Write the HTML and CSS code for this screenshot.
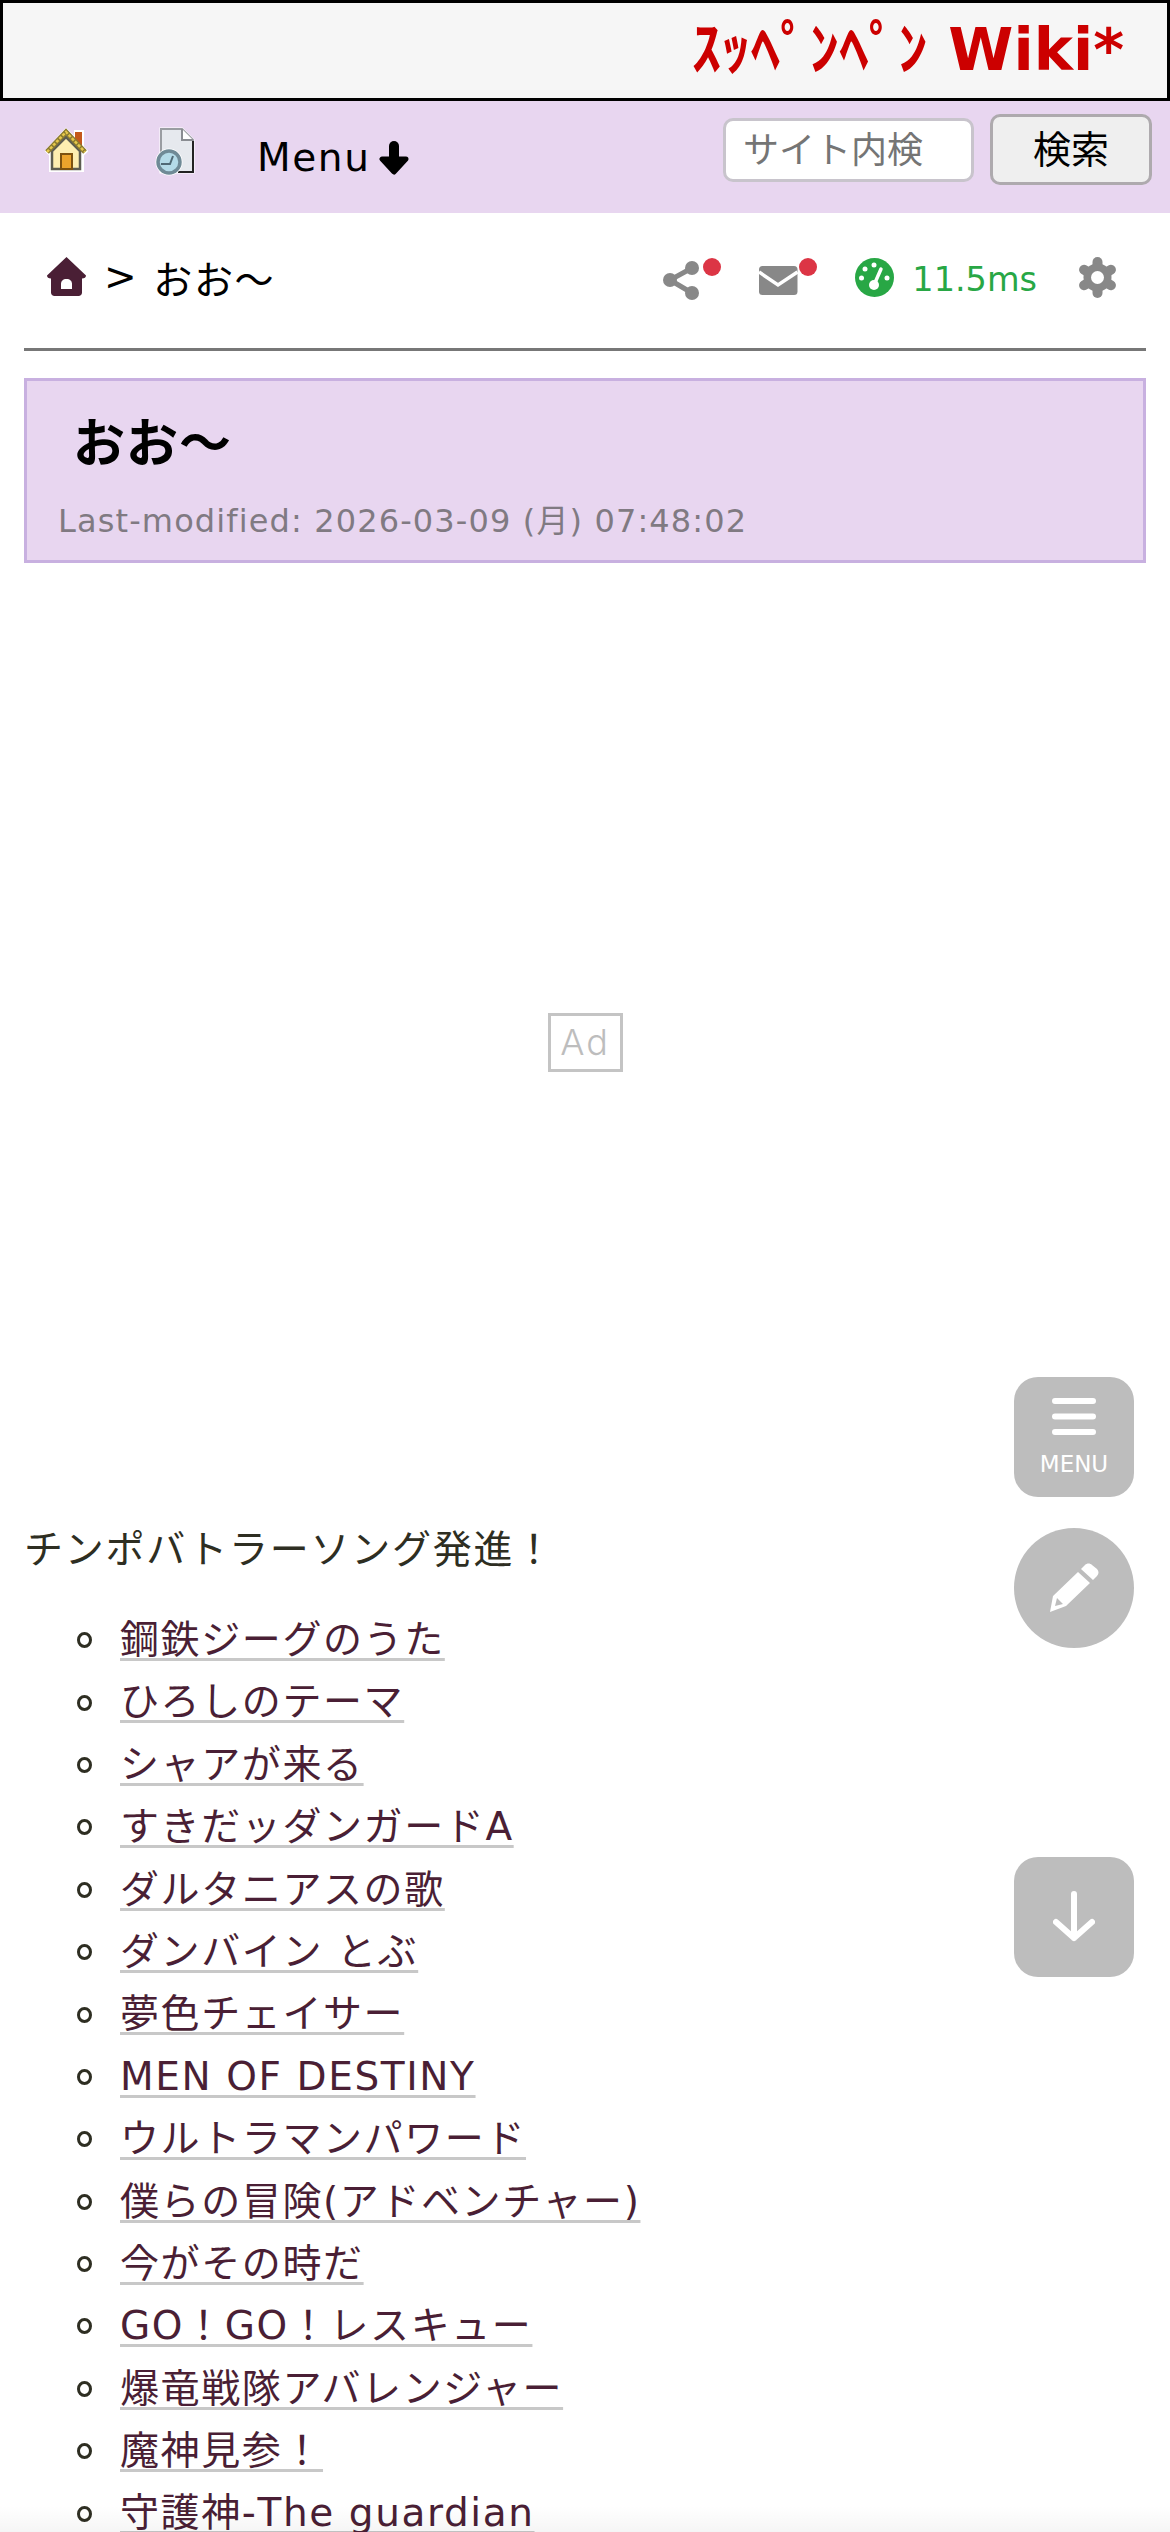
FILE: index.html
```html
<!DOCTYPE html>
<html lang="ja">

<head>
    <meta charset="UTF-8">
    <title>おお〜</title>
    <link rel="stylesheet" href="styles.css">
</head>

<body>
    <div class="page">

        <header class="banner">
            <span class="logo">ｽｯﾍﾟﾝﾍﾟﾝ Wiki*</span>
        </header>

        <nav class="nav">
            <a class="nav-home" href="#">
                <svg class="nav-icon" width="44" height="46" viewBox="0 0 44 46">
                    <path d="M2 24 22 2l9 9V4h8v16l4 4-4 4v16H6V28z" fill="#fff" stroke="#fff" stroke-width="2" />
                    <path d="M31 14V5h7v15z" fill="#c4581a" />
                    <path d="M8 24 22 10 36 24v18H8z" fill="#fdeeb0" stroke="#5c5c50" stroke-width="2.500" />
                    <path d="M3 25 22 5l19 20" fill="none" stroke="#8a7a30" stroke-width="5" />
                    <path d="M3 25 22 5l19 20" fill="none" stroke="#e6c84a" stroke-width="2.500" stroke-dasharray="3 1.500" />
                    <path d="M17 27h11v15H17z" fill="#eca42c" stroke="#7c5210" stroke-width="2" />
                </svg>
            </a>
            <a class="nav-recent" href="#">
                <svg class="nav-icon" width="42" height="50" viewBox="0 0 42 50">
                    <path d="M7 2h21l11 11v32H7z" fill="#fff" stroke="#fff" stroke-width="3" />
                    <path d="M7 26V2h21l11 11v32H24" fill="#e6e9ee" stroke="#9a9da2" stroke-width="2" />
                    <path d="M39 14v31H24" fill="none" stroke="#222" stroke-width="2" />
                    <path d="M28 2v11h11" fill="#fff" stroke="#8a8d92" stroke-width="2" />
                    <circle cx="15" cy="35" r="13.500" fill="#fff" />
                    <circle cx="15" cy="35" r="11" fill="#b4dbe8" stroke="#6f8a96" stroke-width="3.500" />
                    <path d="M7 37h9l3-8" fill="none" stroke="#506a76" stroke-width="2" />
                </svg>
            </a>
            <a class="nav-menu" href="#">Menu
                <svg width="30" height="34" viewBox="0 0 30 34">
                    <path d="M15 5v16" stroke="#000" stroke-width="10" stroke-linecap="round" />
                    <path d="M3 18h24L15 31z" fill="#000" stroke="#000" stroke-width="5" stroke-linejoin="round" />
                </svg>
            </a>
            <form class="search">
                <input class="search-input" type="text" placeholder="サイト内検索">
                <button class="search-btn" type="button">検索</button>
            </form>
        </nav>

        <div class="crumbs">
            <div class="crumb-path">
                <svg width="39" height="39" viewBox="0 0 39 39">
                    <path d="M19.500 0 39 18.500c0 2-1.500 3-4 3v14c0 2-1.500 3.500-3.500 3.500h-24C5.500 39 4 37.500 4 35.500v-14c-2.500 0-4-1-4-3z" fill="#4a1f35" />
                    <path d="M14 32v-5c0-3 2-5 5.500-5s5.500 2 5.500 5v5z" fill="#fff" />
                </svg>
                <span class="crumb-sep">&gt;</span>
                <span class="crumb-name">おお〜</span>
            </div>
            <div class="tools">
                <svg width="58" height="46" viewBox="0 0 58 46">
                    <path d="M29 11 7 23l22 13" fill="none" stroke="#888" stroke-width="5" />
                    <circle cx="29" cy="11" r="7" fill="#888" />
                    <circle cx="7" cy="23" r="7" fill="#888" />
                    <circle cx="29" cy="36" r="7" fill="#888" />
                    <circle cx="49" cy="10" r="9" fill="#dc3545" />
                </svg>
                <svg width="58" height="46" viewBox="0 0 58 46">
                    <rect x="0" y="9" width="38.500" height="29" rx="3.500" fill="#888" />
                    <path d="M0 15 19 28 38.500 15" fill="none" stroke="#fff" stroke-width="3.500" />
                    <circle cx="49" cy="10" r="9" fill="#dc3545" />
                </svg>
                <svg class="gauge" width="39" height="39" viewBox="0 0 39 39">
                    <circle cx="19.500" cy="19.500" r="19.500" fill="#28a745" />
                    <circle cx="19" cy="7" r="2.500" fill="#fff" />
                    <circle cx="10" cy="11" r="2.500" fill="#fff" />
                    <circle cx="6.500" cy="20" r="2.500" fill="#fff" />
                    <circle cx="32" cy="20" r="2.500" fill="#fff" />
                    <circle cx="19" cy="27" r="5" fill="#fff" />
                    <path d="M19 27 26 11" stroke="#fff" stroke-width="3.500" stroke-linecap="round" />
                </svg>
                <span class="speed">11.5ms</span>
                <svg class="gear" width="39" height="41" viewBox="0 0 39 41">
                    <g stroke="#888" stroke-width="10" stroke-linecap="round">
                        <path d="M19.500 5v31" />
                        <path d="M6.100 12.750 32.900 28.250" />
                        <path d="M6.100 28.250 32.900 12.750" />
                    </g>
                    <circle cx="19.500" cy="20.500" r="14" fill="#888" />
                    <circle cx="19.500" cy="20.500" r="6.500" fill="#fff" />
                </svg>
            </div>
        </div>

        <hr class="rule">

        <div class="title-box">
            <h1 class="title">おお〜</h1>
            <p class="modified">Last-modified: 2026-03-09 (月) 07:48:02</p>
        </div>

        <div class="ad-slot">
            <span class="ad-mark">Ad</span>
        </div>

        <div class="content">
            <p class="lead">チンポバトラーソング発進！</p>
            <ul class="songs">
                <li><a href="#">鋼鉄ジーグのうた</a></li>
                <li><a href="#">ひろしのテーマ</a></li>
                <li><a href="#">シャアが来る</a></li>
                <li><a href="#">すきだッダンガードA</a></li>
                <li><a href="#">ダルタニアスの歌</a></li>
                <li><a href="#">ダンバイン とぶ</a></li>
                <li><a href="#">夢色チェイサー</a></li>
                <li><a href="#">MEN OF DESTINY</a></li>
                <li><a href="#">ウルトラマンパワード</a></li>
                <li><a href="#">僕らの冒険(アドベンチャー)</a></li>
                <li><a href="#">今がその時だ</a></li>
                <li><a href="#">GO！GO！レスキュー</a></li>
                <li><a href="#">爆竜戦隊アバレンジャー</a></li>
                <li><a href="#">魔神見参！</a></li>
                <li><a href="#">守護神-The guardian</a></li>
            </ul>
        </div>

        <a class="float-btn float-menu" href="#">
            <svg width="44" height="40" viewBox="0 0 44 40">
                <path d="M3 4h38M3 19.500h38M3 35h38" stroke="#fff" stroke-width="6" stroke-linecap="round" />
            </svg>
            <span class="float-label">MENU</span>
        </a>
        <a class="float-btn float-edit" href="#">
            <svg width="50" height="50" viewBox="0 0 50 50">
                <path d="M36 2c2-2 5-2 7 0l5 4c2 2 2 5 0 7l-4 4-12-11z" fill="#fff" />
                <path d="M29 9 41 20 17 43 1 49l3-16zM8 35l-2 8 8-2z" fill="#fff" fill-rule="evenodd" />
            </svg>
        </a>
        <a class="float-btn float-down" href="#">
            <svg width="42" height="52" viewBox="0 0 42 52">
                <path d="M21 3v44M3 31l18 16 18-16" fill="none" stroke="#fff" stroke-width="6" stroke-linecap="round" stroke-linejoin="round" />
            </svg>
        </a>

        <div class="bottom-fade"></div>
    </div>
</body>

</html>
```

FILE: styles.css
```css
html,
body {
    margin: 0;
    padding: 0;
}

body {
    font-family: "DejaVu Sans", "Noto Sans CJK JP", sans-serif;
    font-size: 39px;
    letter-spacing: 1.6px;
    color: #2e2e22;
    background-color: #fff;
}

a {
    text-decoration: none;
}

.page {
    position: relative;
    width: 1170px;
    height: 2532px;
    overflow: hidden;
}

.banner {
    box-sizing: border-box;
    height: 101px;
    border: 3px solid #000;
    background-color: #f6f6f6;
    display: flex;
    justify-content: flex-end;
    align-items: center;
    padding: 0 43px 3px 0;
}

.logo {
    font-size: 59px;
    font-weight: bold;
    letter-spacing: 0;
    line-height: 1;
    color: #cc0000;
}

.nav {
    box-sizing: border-box;
    height: 112px;
    background-color: #e8d6f0;
    display: flex;
    align-items: flex-start;
    padding-left: 44px;
}

.nav-icon {
    display: block;
}

.nav-home {
    margin-top: 26px;
}

.nav-recent {
    margin-top: 26px;
    margin-left: 66px;
}

.nav-menu {
    margin-left: 61px;
    margin-top: 35px;
    line-height: 44px;
    color: #000;
    display: flex;
    align-items: center;
    gap: 9px;
}

.search {
    margin-left: auto;
    margin-right: 18px;
    margin-top: 13px;
    display: flex;
    align-items: flex-start;
    gap: 16px;
}

.search-input {
    box-sizing: border-box;
    width: 251px;
    height: 64px;
    margin-top: 4px;
    padding: 0 48px 0 17px;
    border: 3px solid #c8c4cc;
    border-radius: 10px;
    background-color: #fff;
    font-family: "DejaVu Sans", "Noto Sans CJK JP", sans-serif;
    font-size: 36px;
}

.search-input::placeholder {
    color: #757575;
}

.search-btn {
    box-sizing: border-box;
    width: 162px;
    height: 71px;
    padding: 0 0 6px;
    border: 3px solid #aeaaae;
    border-radius: 10px;
    background-color: #efefef;
    color: #000;
    font-family: "DejaVu Sans", "Noto Sans CJK JP", sans-serif;
    font-size: 38px;
}

.crumbs {
    box-sizing: border-box;
    height: 135px;
    padding: 44px 53px 0 47px;
    display: flex;
    justify-content: space-between;
    align-items: flex-start;
}

.crumb-path {
    display: flex;
    align-items: center;
    height: 39px;
    color: #000;
}

.crumb-sep {
    margin-left: 18px;
}

.crumb-name {
    margin-left: 15px;
}

.tools {
    display: flex;
    align-items: flex-start;
    gap: 38px;
}

.gauge {
    margin-top: 1px;
}

.speed {
    margin-top: 3px;
    margin-left: -20px;
    font-size: 33.5px;
    letter-spacing: 0;
    line-height: 39px;
    color: #28a745;
}

.gear {
    margin-left: 3px;
}

.rule {
    height: 3px;
    margin: 0 24px;
    border: 0;
    background-color: #777;
}

.title-box {
    box-sizing: border-box;
    height: 185px;
    margin: 27px 24px 0;
    border: 3px solid #c8b0e0;
    background-color: #e8d6f0;
    padding: 28px 31px 0;
}

.title {
    margin: 0 0 0 15px;
    font-size: 52px;
    font-weight: bold;
    letter-spacing: 1px;
    line-height: 70px;
    color: #000;
}

.modified {
    margin: 22px 0 0;
    font-size: 32px;
    letter-spacing: 1.13px;
    line-height: 40px;
    color: #807a82;
}

.ad-slot {
    height: 958px;
    display: flex;
    align-items: center;
    justify-content: center;
}

.ad-mark {
    box-sizing: border-box;
    width: 75px;
    height: 59px;
    border: 3px solid #c4c4c4;
    display: flex;
    align-items: center;
    justify-content: center;
    font-family: "Inter", sans-serif;
    font-size: 36px;
    font-weight: 300;
    letter-spacing: 2px;
    color: #bdbdbd;
}

.content {
    padding: 0 24px;
}

.lead {
    margin: 0;
    letter-spacing: 1.75px;
    line-height: 58px;
}

.songs {
    margin: 30px 0 0;
    padding: 0 0 0 53px;
    list-style: none;
}

.songs li {
    display: flex;
    align-items: center;
    gap: 28px;
    height: 62.4px;
    line-height: 62.4px;
    white-space: nowrap;
}

.songs li::before {
    content: "";
    box-sizing: border-box;
    flex: none;
    width: 15px;
    height: 16px;
    border: 3.5px solid #2e2e22;
    border-radius: 50%;
}

.songs a {
    color: #4a1f35;
    text-decoration: underline 3px #c8c8c8;
    text-decoration-skip-ink: none;
    text-underline-offset: 5px;
}

.float-btn {
    position: absolute;
    right: 36px;
    width: 120px;
    height: 120px;
    border-radius: 24px;
    background-color: #bdbdbd;
    display: flex;
    flex-direction: column;
    align-items: center;
    justify-content: center;
}

.float-menu {
    top: 1377px;
    box-sizing: border-box;
    padding-top: 20px;
    justify-content: flex-start;
    gap: 15px;
}

.float-edit {
    top: 1528px;
    border-radius: 50%;
}

.float-down {
    top: 1857px;
}

.float-label {
    font-size: 23px;
    letter-spacing: 0;
    line-height: 24px;
    color: #fff;
}

.bottom-fade {
    position: absolute;
    left: 0;
    right: 0;
    bottom: 0;
    height: 26px;
    background: linear-gradient(to bottom, rgba(0, 0, 0, 0), rgba(0, 0, 0, 0.04));
}
```
